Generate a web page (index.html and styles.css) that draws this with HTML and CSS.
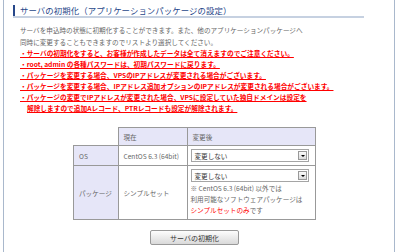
FILE: index.html
```html
<!DOCTYPE html>
<html lang="ja">
<head>
<meta charset="utf-8">
<link rel="stylesheet" href="styles.css">
</head>
<body>
<div class="frame">
  <div class="content">
    <h2 class="title">サーバの初期化（アプリケーションパッケージの設定）</h2>
    <p class="lead">サーバを申込時の状態に初期化することができます。また、他のアプリケーションパッケージへ<br>同時に変更することもできますのでリストより選択してください。</p>
    <ul class="notes">
      <li>・サーバの初期化をすると、お客様が作成したデータは全て消えますのでご注意ください。</li>
      <li>・root, admin の各種パスワードは、初期パスワードに戻ります。</li>
      <li>・パッケージを変更する場合、VPSのIPアドレスが変更される場合がございます。</li>
      <li>・パッケージを変更する場合、IPアドレス追加オプションのIPアドレスが変更される場合がございます。</li>
      <li>・パッケージの変更でIPアドレスが変更された場合、VPSに設定していた独自ドメインは設定を</li>
      <li class="indent">解除しますので追加Aレコード、PTRレコードも設定が解除されます。</li>
    </ul>
    <table class="grid">
      <tr>
        <th class="blank"></th>
        <th class="hd">現在</th>
        <th class="hd">変更後</th>
      </tr>
      <tr class="row-os">
        <th class="lbl">OS</th>
        <td class="cur">CentOS 6.3 (64bit)</td>
        <td class="new"><div class="select"><span>変更しない</span><i class="arrow"></i></div></td>
      </tr>
      <tr class="row-pkg">
        <th class="lbl">パッケージ</th>
        <td class="cur">シンプルセット</td>
        <td class="new">
          <div class="select"><span>変更しない</span><i class="arrow"></i></div>
          <div class="hint">※ CentOS 6.3 (64bit) 以外では<br>利用可能なソフトウェアパッケージは<br><span class="red">シンプルセットのみ</span>です</div>
        </td>
      </tr>
    </table>
    <div class="actions"><button class="btn">サーバの初期化</button></div>
  </div>
</div>
</body>
</html>
```
FILE: styles.css
```css
html, body {
  margin: 0;
  padding: 0;
  background: #fff;
}
body {
  font-family: "Noto Sans CJK JP", "Liberation Sans", sans-serif;
  font-size: 7px;
  color: #666;
}
.frame {
  margin-left: 3px;
  width: 392px;
  height: 252px;
  border-left: 1px solid #a9b8cc;
  border-right: 1px solid #a9b8cc;
  box-sizing: border-box;
}
.content {
  padding: 5px 30px 0 9px;
}
.title {
  margin: 0;
  font-size: 8.4px;
  font-weight: normal;
  color: #27478a;
  line-height: 10px;
  padding-left: 5px;
  border-left: 2px solid #27478a;
  position: relative;
  padding-bottom: 1px;
  letter-spacing: 0.1px;
}
.title::after {
  content: "";
  position: absolute;
  left: -2px;
  right: 0;
  bottom: -2px;
  height: 2px;
  background: #c6d1e1;
}
.lead {
  margin: 8px 0 0 7px;
  font-size: 6.6px;
  line-height: 12px;
  color: #666;
}
.notes {
  list-style: none;
  margin: 0 0 0 7px;
  padding: 0;
  color: #f00;
  font-size: 6.7px;
  font-weight: bold;
  line-height: 11px;
}
.notes li {
  text-decoration: underline;
  white-space: nowrap;
}
.notes li.indent {
  padding-left: 7px;
}
.grid {
  margin: 13px 0 0 60px;
  border-collapse: collapse;
  font-size: 6.6px;
  color: #666;
}
.grid th, .grid td {
  border: 1px solid #999;
  font-weight: normal;
  text-align: left;
  padding: 0 5px;
}
.grid th.blank {
  border: none;
  border-right: 1px solid #999;
  border-bottom: 1px solid #999;
  width: 34px;
  background: #fff;
}
.grid th.hd {
  background: #e6e6f8;
  height: 17px;
}
.grid th.lbl {
  background: #e6e6f8;
}
.grid td.cur {
  width: 58px;
}
.grid td.new {
  width: 118px;
  padding: 3px 6px 3px 3px;
}
.row-os td, .row-os th {
  height: 13px;
}
.row-pkg th, .row-pkg td.cur {
  vertical-align: middle;
}
.select {
  display: flex;
  align-items: center;
  justify-content: space-between;
  height: 13px;
  border: 1px solid #a5a5a5;
  box-sizing: border-box;
  background: #fff;
  color: #333;
  padding-left: 3px;
  width: 118px;
}
.arrow {
  width: 9px;
  height: 9px;
  margin-right: 1px;
  border: 1px solid #999;
  box-sizing: border-box;
  background: linear-gradient(#fafafa, #dcdcdc);
  position: relative;
}
.arrow::after {
  content: "";
  position: absolute;
  left: 2px;
  top: 3px;
  border-left: 2px solid transparent;
  border-right: 2px solid transparent;
  border-top: 2px solid #000;
}
.hint {
  margin-top: 1px;
  line-height: 11px;
  color: #666;
}
.red {
  color: #f00;
}
.actions {
  margin-top: 10px;
  padding-left: 137px;
}
.btn {
  width: 89px;
  height: 15px;
  border: 1px solid #999;
  border-radius: 2px;
  background: linear-gradient(#fdfdfd, #d9d9d9);
  font-family: "Noto Sans CJK JP", sans-serif;
  font-size: 7px;
  color: #333;
  padding: 0;
}
```
